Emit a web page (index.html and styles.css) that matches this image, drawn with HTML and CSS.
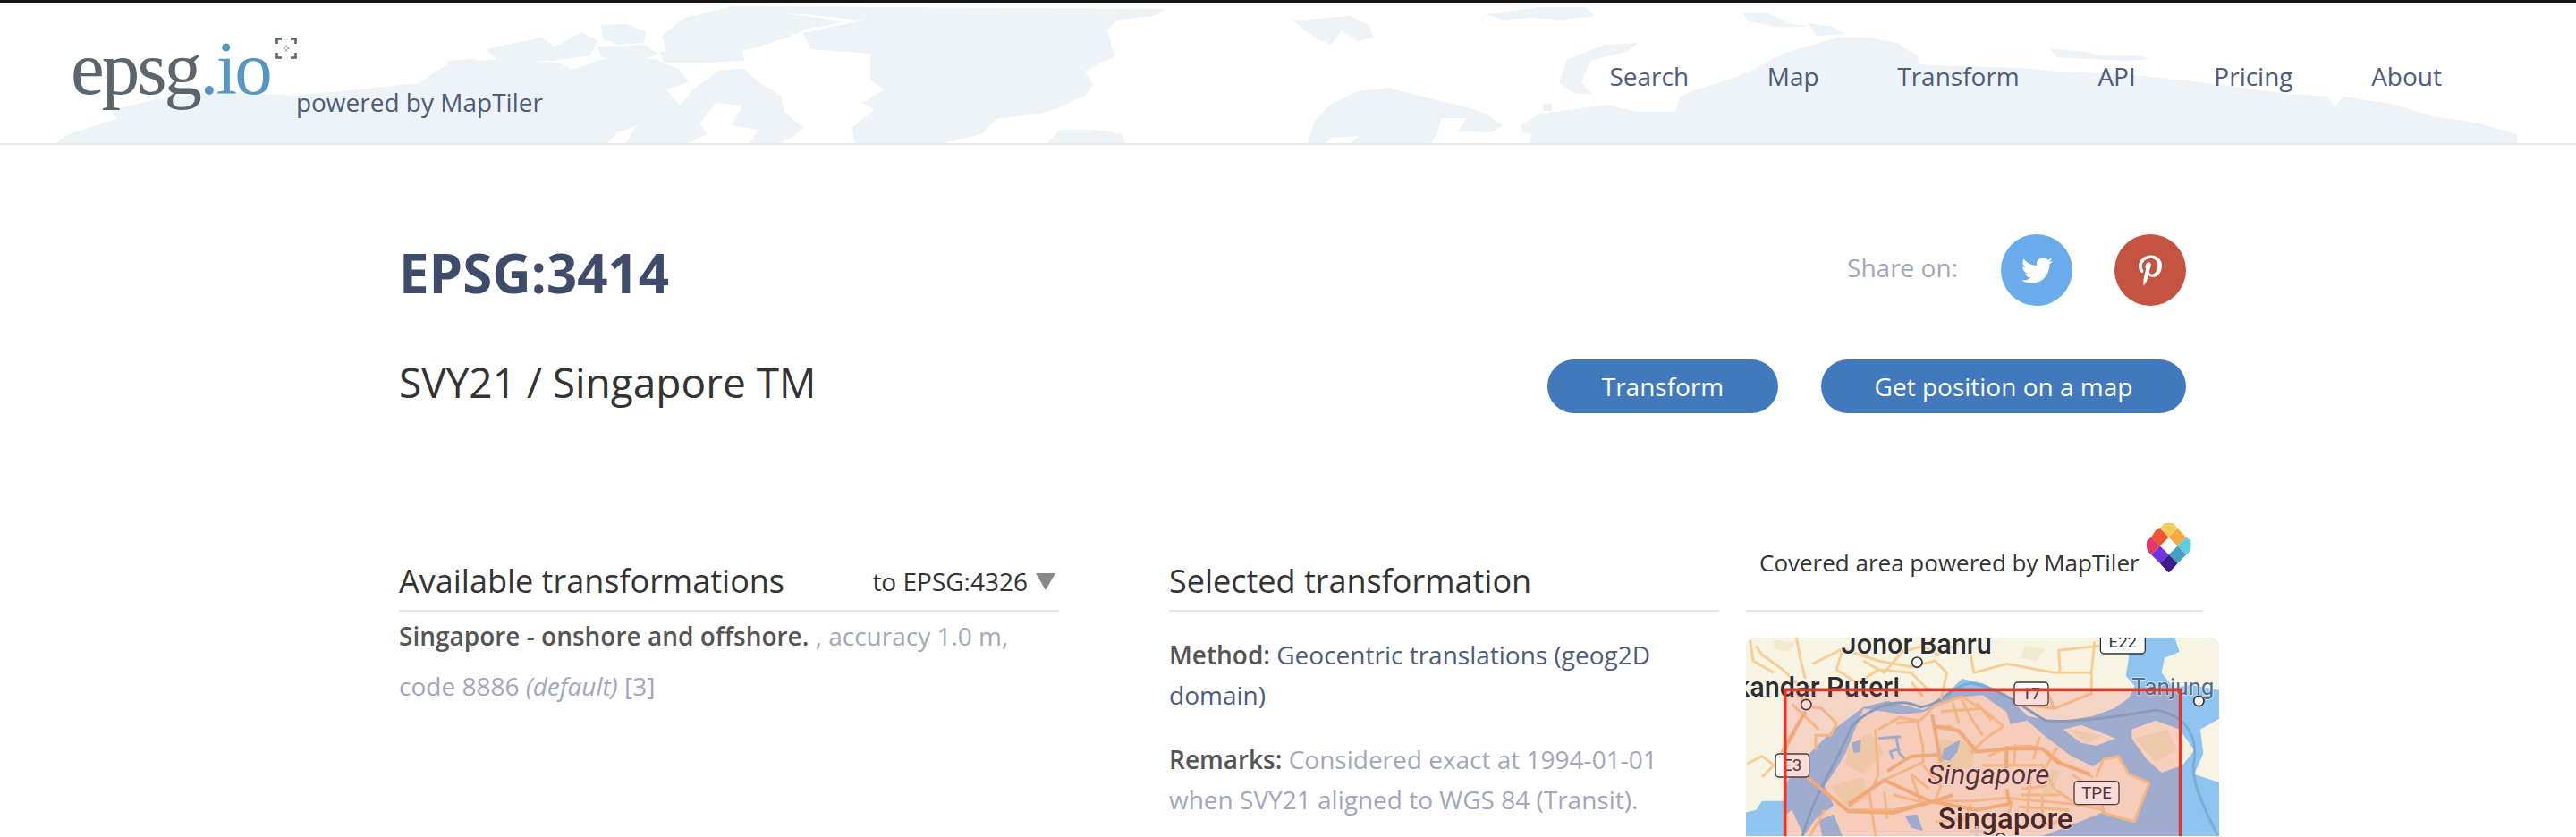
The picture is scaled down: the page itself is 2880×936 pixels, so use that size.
FILE: index.html
```html
<!DOCTYPE html>
<html lang="en">
<head>
    <meta charset="UTF-8">
    <meta name="viewport" content="width=device-width, initial-scale=1.0">
    <title>EPSG:3414 - SVY21 / Singapore TM</title>
    <link rel="stylesheet" href="styles.css">
</head>
<body>
    <header class="site-header">
        <!-- pale world map behind the header -->
        <svg class="header-map" viewBox="0 0 2880 157" preserveAspectRatio="none" aria-hidden="true">
            <g transform="translate(0,-3)">
                <path d="M62 160L76 150 130 133 125 123 170 112 232 103 268 103 330 107 400 100 469 93 490 78 504 70 560 66 625 70 640 78 668 68 700 60 735 67 760 78 770 92 745 100 760 118 775 100 805 78 832 77 848 92 873 107 877 125 898 143 888 152 873 160 838 160 848 145 818 140 830 118 800 115 782 138 790 150 770 160 700 160 712 140 690 148 680 160Z"/>
                <path d="M815 7L1304 10 1290 18 1250 22 1238 33 1246 63 1232 70 1213 80 1222 95 1213 107 1180 122 1163 127 1113 133 1098 150 1055 160 956 160 952 143 977 123 964 115 989 100 973 90 973 60 906 55 898 37 964 23 900 16 845 14Z"/>
                <path d="M765 20L815 8 900 18 945 24 900 33 880 42 832 57 790 62 745 58 740 40Z"/>
                <path d="M543 55L605 42 620 52 650 36 668 45 660 62 618 68 585 68 560 70Z"/>
                <path d="M672 28L700 27 722 35 720 48 690 50 674 44Z"/>
                <path d="M738 58L830 53 832 68 790 70 742 70Z"/>
                <path d="M668 52L720 50 736 60 720 66 690 68 672 64Z"/>
                <path d="M500 68L530 66 560 74 590 78 585 90 555 100 520 110 500 96Z"/>
                <path d="M1445 23L1510 18 1530 28 1536 42 1518 46 1500 34 1488 50 1470 42Z"/>
                <path d="M1660 16L1720 8 1772 8 1783 18 1745 22 1710 20 1680 22Z"/>
                <path d="M1948 14L1975 14 2000 26 2036 32 2056 36 2040 30 2012 30 1985 30 1955 24Z"/>
                <path d="M2022 26L2050 30 2062 38 2030 40Z"/>
                <path d="M2292 54L2330 58 2350 62 2392 62 2402 66 2380 68 2335 66 2300 64Z"/>
                <path d="M1743 93L1752 66 1795 50 1832 48 1818 58 1778 68 1768 92 1780 105 1762 105Z"/>
                <path d="M1462 160L1470 135 1487 117 1518 102 1553 98 1590 108 1640 120 1661 127 1680 140 1668 148 1630 147 1640 132 1612 132 1606 150 1600 160 1510 160 1520 152 1490 154 1482 160Z"/>
                <path d="M1700 140L1723 127 1760 122 1798 117 1830 125 1873 125 1878 108 1896 100 1925 92 1956 80 1982 66 2001 57 2028 50 2054 42 2090 42 2121 48 2144 63 2146 72 2166 73 2227 75 2260 76 2302 80 2380 83 2415 87 2460 92 2498 97 2560 105 2603 108 2610 120 2620 108 2678 117 2720 130 2768 137 2814 150 2814 160 1710 160 1712 150 1702 148Z"/>
                <path d="M1725 115L1735 116 1735 124 1725 124Z"/>
                <path d="M1171 160L1185 145 1225 145 1254 150 1258 160Z"/>
            </g>
        </svg>
        <div class="brand">
            <a class="logo" href="#">epsg<span class="logo-io">.io</span></a>
            <svg class="logo-mark" viewBox="0 0 24 24" aria-hidden="true">
                <path d="M1.500 7V1.500H7M17 1.500H22.500V7M22.500 17V22.500H17M7 22.500H1.500V17" fill="none" stroke="#5a656d" stroke-width="2.600"/>
                <path d="M12 8.500V11M12 13V15.500M8.500 12H11M13 12H15.500" stroke="#5a656d" stroke-width="1"/>
            </svg>
            <span class="powered">powered by MapTiler</span>
        </div>
        <nav class="main-nav">
            <a href="#">Search</a>
            <a href="#">Map</a>
            <a href="#">Transform</a>
            <a href="#">API</a>
            <a href="#">Pricing</a>
            <a href="#">About</a>
        </nav>
    </header>

    <main class="content">
        <div class="title-row">
            <h1>EPSG:3414</h1>
            <div class="share">
                <span class="share-label">Share on:</span>
                <a class="share-btn twitter" href="#">
                    <svg viewBox="0 0 24 24" width="35" height="35" aria-hidden="true"><path fill="#fff" d="M23.953 4.570a10 10 0 01-2.825.775 4.958 4.958 0 002.163-2.723c-.951.555-2.005.959-3.127 1.184a4.920 4.920 0 00-8.384 4.482C7.690 8.095 4.067 6.130 1.640 3.162a4.822 4.822 0 00-.666 2.475c0 1.710.870 3.213 2.188 4.096a4.904 4.904 0 01-2.228-.616v.060a4.923 4.923 0 003.946 4.827 4.996 4.996 0 01-2.212.085 4.936 4.936 0 004.604 3.417 9.867 9.867 0 01-6.102 2.105c-.390 0-.779-.023-1.170-.067a13.995 13.995 0 007.557 2.209c9.053 0 13.998-7.496 13.998-13.985 0-.210 0-.420-.015-.630A9.935 9.935 0 0024 4.590z"/></svg>
                </a>
                <a class="share-btn pinterest" href="#">
                    <svg viewBox="0 0 384 512" width="26" height="35" aria-hidden="true"><path fill="#fff" d="M204 6.500C101.400 6.500 0 74.900 0 185.600 0 256 39.600 296 63.600 296c9.900 0 15.600-27.600 15.600-35.400 0-9.300-23.700-29.100-23.700-67.800 0-80.400 61.200-137.400 140.400-137.400 68.100 0 118.500 38.700 118.500 109.800 0 53.100-21.300 152.700-90.300 152.700-24.900 0-46.200-18-46.200-43.800 0-37.800 26.400-74.400 26.400-113.400 0-66.200-93.900-54.200-93.900 25.800 0 16.800 2.100 35.400 9.600 50.700-13.800 59.400-42 147.900-42 209.100 0 18.900 2.700 37.500 4.500 56.400 3.400 3.800 1.700 3.400 6.900 1.500 50.400-69 48.600-82.500 71.400-172.800 12.300 23.400 44.100 36 69.300 36 106.200 0 153.900-103.500 153.900-196.800C384 71.300 298.200 6.500 204 6.500z"/></svg>
                </a>
            </div>
        </div>

        <div class="name-row">
            <h2 class="crs-name">SVY21 / Singapore TM</h2>
            <div class="actions">
                <a class="btn btn-transform" href="#">Transform</a>
                <a class="btn btn-position" href="#">Get position on a map</a>
            </div>
        </div>

        <div class="columns">
            <section class="col col-left">
                <div class="col-head">
                    <h3>Available transformations</h3>
                    <span class="target">to EPSG:4326<i class="arrow"></i></span>
                </div>
                <p class="transform-item"><strong>Singapore - onshore and offshore.</strong> , accuracy 1.0 m, code 8886 <em>(default)</em> [3]</p>
            </section>

            <section class="col col-middle">
                <div class="col-head">
                    <h3>Selected transformation</h3>
                </div>
                <p class="detail first"><strong>Method:</strong> <a href="#">Geocentric translations (geog2D domain)</a></p>
                <p class="detail"><strong>Remarks:</strong> Considered exact at 1994-01-01 when SVY21 aligned to WGS 84 (Transit).</p>
            </section>

            <section class="col col-right">
                <div class="col-head area-head">
                    <span class="area-title">Covered area powered by MapTiler</span>
                    <svg class="mt-logo" viewBox="0 0 200 200" aria-hidden="true">
                        <defs>
                            <clipPath id="mtClip"><path d="M102 176L42 116Q18 88 44 52L76 24Q102 8 128 24L160 52Q186 88 162 116Z"/></clipPath>
                        </defs>
                        <g clip-path="url(#mtClip)">
                            <path fill="#f6cc5c" d="M102 0L130 34 102 62 74 34Z"/>
                            <path fill="#ef5533" d="M74 34L102 62 74 90 46 62 60 40Z"/>
                            <path fill="#f6a93c" d="M130 34L158 62 130 90 102 62Z"/>
                            <path fill="#e13a6a" d="M46 62L74 90 46 118 10 90Z"/>
                            <path fill="#5dcfdc" d="M158 62L194 90 158 118 130 90Z"/>
                            <path fill="#6f35e0" d="M74 90L102 118 74 146 46 118Z"/>
                            <path fill="#46a0c4" d="M130 90L158 118 130 146 102 118Z"/>
                            <path fill="#3a1f8c" d="M102 118L130 146 102 180 74 146Z"/>
                        </g>
                    </svg>
                </div>
                <svg class="area-map" viewBox="6 12 1587 666" role="img" aria-label="Map of the covered area">
                    <rect x="0" y="0" width="1600" height="700" fill="#90c4f0"/>
                    <!-- Johor, north of the strait -->
                    <path fill="#f8f4e4" d="M0 0H1250L1285 30 1290 80 1280 140 1310 175 1290 215 1240 250 1170 275 1050 295 950 275 880 205 800 165 730 150 690 190 640 235 600 255 480 225 400 245 300 320 200 420 140 500 130 560 60 560 40 590 0 600Z"/>
                    <path fill="#f8f4e4" d="M1440 0H1600V190L1500 170 1440 180 1400 130 1410 80 1460 60Z"/>
                    <path fill="#f8f4e4" d="M1600 280L1530 320 1540 400 1510 470 1600 500Z"/>
                    <!-- islands to the north east -->
                    <path fill="#f8f0dc" d="M1070 320L1130 305 1220 340 1245 350 1180 375 1130 365Z"/>
                    <path fill="#f8f0dc" d="M1300 320L1380 290 1460 320 1510 390 1470 440 1400 465 1350 420 1300 350Z"/>
                    <!-- Singapore island -->
                    <path fill="#f9ecd8" d="M340 400L400 250 530 270 600 262 650 240 740 210 800 205 880 262 895 310 830 350 900 300 950 290 1000 335 1090 405 1170 445 1215 415 1255 405 1290 470 1362 500 1310 632 1200 600 1100 640 1000 678H200L240 620 300 575 270 510 310 450Z"/>
                    <path fill="#f9ecd8" d="M135 610L160 590 200 678H135Z"/>
                    <!-- park land -->
                    <path fill="#efe4c0" d="M350 380L420 330 470 400 400 470 340 440Z"/>
                    <path fill="#efe4c0" d="M290 510L400 480 420 550 340 580Z"/>
                    <path fill="#efe4c0" d="M650 350L780 370 760 450 640 460Z"/>
                    <path fill="#efe4c0" d="M1030 450L1060 460 1030 540 1000 530Z"/>
                    <path fill="#f0e6c8" d="M1310 350L1420 320 1450 390 1380 430Z"/>
                    <path fill="#f0e6c8" d="M1090 320L1200 340 1150 368Z"/>
                    <path fill="#efe9d2" d="M940 40L1010 50 980 90 930 80Z"/>
                    <path fill="#efe9d2" d="M100 20L170 30 150 60 100 50Z"/>
                    <!-- reservoirs -->
                    <path fill="none" stroke="#90c4f0" stroke-width="9" d="M450 350L510 345 525 345M510 345L520 400 540 420M520 385L490 395 500 420"/>
                    <path fill="#90c4f0" d="M360 365L392 355 390 395 368 400Z"/>
                    <path fill="#90c4f0" d="M670 385L725 355 715 395 690 425 660 420Z"/>
                    <path fill="#90c4f0" d="M250 625L300 605 330 678H262Z"/>
                    <path fill="#90c4f0" d="M540 610L580 605 600 660 560 650Z"/>
                    <!-- boundary line in the water -->
                    <path fill="none" stroke="#74afd8" stroke-width="9" d="M195 678C240 520 320 420 360 310 430 240 520 210 590 245 660 240 700 170 760 165 860 180 940 250 1010 290 1100 300 1240 280 1380 255 1470 270 1520 330 1510 420 1490 490 1560 620 1590 678"/>
                    <!-- roads -->
                    <g fill="none" stroke="#f8cd96" stroke-width="9" stroke-linejoin="round">
                        <path d="M40 40L60 70 130 120 180 170 200 240"/>
                        <path d="M175 12L190 90 205 150"/>
                        <path d="M230 100L330 50 450 90 560 110 640 90 680 130 660 220"/>
                        <path d="M330 50L310 120 380 165 450 120 560 130 620 190"/>
                        <path d="M400 90L470 130 530 60 600 40 650 70 720 30M560 160L600 210"/>
                        <path d="M760 70L770 130 880 100 1040 130 1165 130 1175 25M1060 130L1055 55 1190 40"/>
                        <path d="M1165 130L1165 200 1040 250 960 240M1020 200L1040 250"/>
                        <path d="M200 240L260 250 310 300 290 340 240 340 240 390M160 235L250 320"/>
                        <path d="M10 435L60 410 100 440 60 480M130 400L170 330M20 20L30 90 100 130"/>
                        <path d="M450 320L520 280 580 290 600 380 600 430 470 490 350 580"/>
                        <path d="M440 320L450 470 430 520M510 300L590 290"/>
                        <path d="M590 290L640 240 730 210 810 260 870 310 810 350 760 400M640 310L690 310 740 340"/>
                        <path d="M730 220L760 280 800 340M660 260L800 250M700 230L720 300M780 230L830 290"/>
                        <path d="M820 410L880 380 960 375 1020 395 1060 430 1170 480M880 385L875 460M910 370L905 440M990 345L970 420M1050 380L1010 450"/>
                        <path d="M800 440L1000 440 1040 520 1100 560M930 520L1010 510M960 480L950 600M600 440L660 510 640 560M560 470L620 520"/>
                        <path d="M270 590L220 678M345 590L500 590 640 560 760 560 880 550 1100 570 1210 590M420 530L440 678M470 530L480 620M560 470L590 560M500 540L620 570"/>
                        <path d="M760 570L740 620 640 630M900 560L880 620M1000 540L1000 640 1100 620M930 540L1060 540M920 580L1090 590"/>
                        <path d="M1180 480L1205 420 1255 410 1290 470 1358 500 1308 630 1205 600 1195 540 1100 470"/>
                    </g>
                    <g fill="none" stroke="#f6c08a" stroke-width="12" stroke-linejoin="round">
                        <path d="M125 400L205 260"/>
                        <path d="M210 480L350 595 500 600 640 560 700 540"/>
                        <path d="M350 570L470 490 620 560 780 590 890 570 880 520"/>
                        <path d="M480 460L560 410 650 405"/>
                        <path d="M640 310L720 325 780 395 880 385 1000 385 1050 430 1160 470"/>
                        <path d="M630 270L660 430"/>
                        <path d="M880 385L880 450"/>
                    </g>
                    <!-- labels -->
                    <text class="map-bold" x="578" y="65" font-size="92" text-anchor="middle">Johor Bahru</text>
                    <circle cx="580" cy="95" r="17" fill="#fff" stroke="#333" stroke-width="5"/>
                    <text class="map-bold" x="522" y="210" font-size="92" text-anchor="end">Iskandar Puteri</text>
                    <circle cx="208" cy="237" r="17" fill="#fff" stroke="#333" stroke-width="5"/>
                    <text class="map-light" x="1300" y="205" font-size="78">Tanjung Sekuang</text>
                    <circle cx="1525" cy="225" r="17" fill="#fff" stroke="#333" stroke-width="5"/>
                    <text class="map-italic" x="615" y="505" font-size="94">Singapore</text>
                    <text class="map-capital" x="650" y="655" font-size="100">Singapore</text>
                    <path d="M780 645V678M755 662H805" stroke="#ddd" stroke-width="9"/>
                    <circle cx="860" cy="685" r="16" fill="#fff" stroke="#333" stroke-width="5"/>
                    <g class="shield">
                        <rect x="1195" y="-10" width="150" height="76" rx="12"/>
                        <text x="1270" y="46" font-size="56">E22</text>
                        <rect x="906" y="162" width="114" height="78" rx="12"/>
                        <text x="963" y="220" font-size="56">17</text>
                        <rect x="105" y="402" width="113" height="78" rx="12"/>
                        <text x="161" y="460" font-size="56">E3</text>
                        <rect x="1107" y="494" width="150" height="78" rx="12"/>
                        <text x="1182" y="552" font-size="56">TPE</text>
                    </g>
                    <!-- requested area -->
                    <rect x="137" y="187" width="1326" height="600" fill="#e44132" fill-opacity=".18" stroke="#e8352a" stroke-width="11"/>
                </svg>
            </section>
        </div>
    </main>
</body>
</html>
```

FILE: styles.css
```css
html, body {
    margin: 0;
    height: 936px;
    overflow: hidden;
    background: #fff;
}
body {
    font-family: "Open Sans", Arial, sans-serif;
    color: #333;
}
a {
    text-decoration: none;
    color: inherit;
}

/* header */
.site-header {
    position: relative;
    height: 157px;
    border-top: 3px solid #151515;
    border-bottom: 2px solid #e8e8e8;
    display: flex;
    justify-content: space-between;
}
.header-map {
    position: absolute;
    left: 0;
    top: 0;
    width: 2880px;
    height: 157px;
    fill: #edf3f7;
}
.brand {
    position: relative;
    display: flex;
    align-items: flex-start;
    padding-left: 79px;
}
.logo {
    font-family: "Liberation Serif", "Times New Roman", serif;
    font-size: 85px;
    line-height: 96px;
    letter-spacing: -2.900px;
    color: #5a656d;
    margin-top: 25px;
}
.logo-io {
    color: #5596c4;
}
.logo-mark {
    width: 24px;
    height: 24px;
    margin: 39px 0 0 6px;
}
.powered {
    font-size: 28px;
    line-height: 38px;
    color: #4d5b7c;
    margin: 92px 0 0 -1px;
}
.main-nav {
    position: relative;
    display: flex;
    gap: 87.600px;
    padding: 63px 150px 0 0;
    font-size: 28px;
    line-height: 38px;
    color: #4d5b7c;
}

/* page content */
.content {
    margin-left: 446px;
    width: 2036px;
}
.title-row,
.name-row {
    width: 1998px;
    display: flex;
    justify-content: space-between;
}
.title-row {
    padding-top: 100px;
    height: 80px;
    align-items: center;
}
h1 {
    margin: 6px 0 0;
    font-size: 60px;
    line-height: 80px;
    font-weight: 700;
    color: #3f4b6b;
}
.share {
    display: flex;
    align-items: center;
    gap: 48px;
}
.share-label {
    font-size: 28px;
    color: #a0a8bc;
    margin-bottom: 6px;
}
.share-btn {
    width: 80px;
    height: 80px;
    border-radius: 50%;
    display: flex;
    align-items: center;
    justify-content: center;
}
.twitter {
    background: #6aaceb;
}
.pinterest {
    background: #c4533f;
    margin-left: -1px;
}
.name-row {
    margin-top: 60px;
    height: 60px;
    align-items: center;
}
.crs-name {
    margin: 0 0 10px;
    font-size: 46px;
    line-height: 60px;
    font-weight: 400;
    color: #333;
}
.actions {
    display: flex;
    gap: 48px;
}
.btn {
    height: 60px;
    line-height: 60px;
    border-radius: 30px;
    background: #4279bd;
    color: #fff;
    font-size: 28px;
    text-align: center;
}
.btn-transform {
    width: 258px;
}
.btn-position {
    width: 408px;
}

/* three columns */
.columns {
    display: flex;
    margin-top: 158px;
}
.col-left {
    width: 738px;
    margin-right: 123px;
}
.col-middle {
    width: 615px;
    margin-right: 30px;
}
.col-right {
    width: 529px;
}
.col-head {
    display: flex;
    justify-content: space-between;
    align-items: center;
    height: 62px;
    border-bottom: 2px solid #e6e6e6;
}
h3 {
    margin: 0 0 2px;
    font-size: 36px;
    font-weight: 400;
    line-height: 50px;
    color: #333;
}
.target {
    font-size: 28px;
    color: #333;
    display: flex;
    align-items: center;
    margin: 0 4px 2px 0;
}
.arrow {
    width: 0;
    height: 0;
    margin-left: 9px;
    border-left: 11px solid transparent;
    border-right: 11px solid transparent;
    border-top: 19px solid #888;
}
.transform-item {
    margin: -1px 0 0;
    font-size: 28px;
    line-height: 56px;
    color: #a0a8bc;
}
.transform-item strong,
.detail strong {
    font-weight: 600;
    color: #555;
}
.detail {
    margin: 27px 0 0;
    font-size: 28px;
    line-height: 45px;
    color: #a0a8bc;
}
.detail.first {
    margin-top: 26px;
}
.detail a {
    color: #4d5b7c;
}
.area-head {
    width: 511px;
    justify-content: flex-start;
    position: relative;
}
.area-title {
    font-size: 26px;
    margin-left: 15px;
    padding-bottom: 44px;
    color: #333;
}
.mt-logo {
    position: absolute;
    left: 437px;
    top: -41px;
    width: 70px;
    height: 70px;
}
.area-map {
    display: block;
    margin-top: 29px;
    width: 529px;
    height: 222px;
    border-radius: 12px 12px 0 0;
}

/* map labels */
.area-map text {
    font-family: Roboto, "Open Sans", sans-serif;
}
.map-bold {
    font-weight: 500;
    fill: #2e2e2e;
    stroke: #fff;
    stroke-opacity: .75;
    stroke-width: 6;
    paint-order: stroke;
}
.map-light {
    fill: #4f6f8c;
    stroke: #fff;
    stroke-opacity: .7;
    stroke-width: 5;
    paint-order: stroke;
}
.map-italic {
    font-style: italic;
    fill: #3c2b3f;
    stroke: #fff;
    stroke-opacity: .5;
    stroke-width: 5;
    paint-order: stroke;
}
.map-capital {
    font-weight: 500;
    fill: #2e2324;
    stroke: #fff;
    stroke-opacity: .7;
    stroke-width: 6;
    paint-order: stroke;
}
.shield rect {
    fill: #fff;
    stroke: #333;
    stroke-width: 4;
}
.shield text {
    fill: #333;
    text-anchor: middle;
}
```
